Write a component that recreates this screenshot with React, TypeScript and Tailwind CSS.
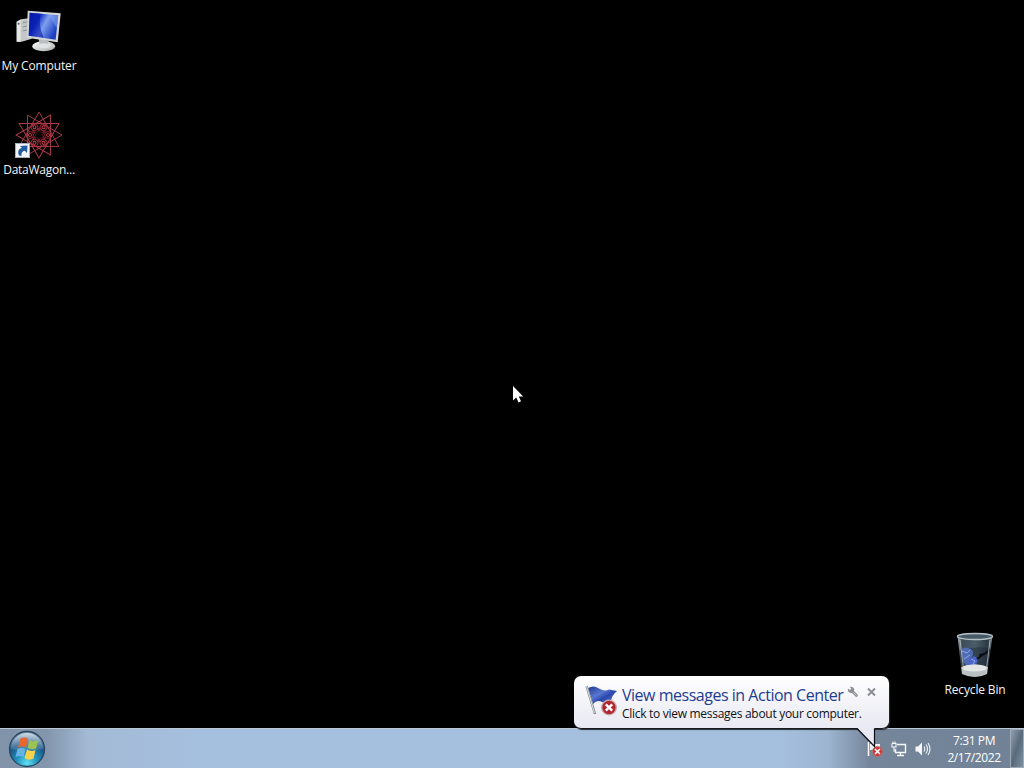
import type { ReactNode } from "react";

type DesktopIconProps = {
  label: string;
  className: string;
  labelClassName: string;
  children: ReactNode;
};

const triangles = [0, 30, 60, 90];
const rings = [0, 60, 120, 180, 240, 300];

function DesktopIcon({ label, className, labelClassName, children }: DesktopIconProps) {
  return (
    <div className={`absolute flex w-[78px] flex-col items-center ${className}`}>
      {children}
      <span
        className={`mt-[3px] whitespace-nowrap text-[12px] leading-4 text-[#f4f4f4] ${labelClassName}`}
      >
        {label}
      </span>
    </div>
  );
}

function ComputerIcon() {
  return (
    <svg width="48" height="48" viewBox="0 0 48 48">
      <defs>
        <linearGradient id="screen" x1="0" y1="0" x2="1" y2="0.5">
          <stop offset="0" stopColor="#0618a0" />
          <stop offset="0.35" stopColor="#1230c8" />
          <stop offset="0.6" stopColor="#7fa0ee" />
          <stop offset="1" stopColor="#1d3fc0" />
        </linearGradient>
        <linearGradient id="stand" x1="0" y1="0" x2="1" y2="1">
          <stop offset="0" stopColor="#ffffff" />
          <stop offset="1" stopColor="#a9adad" />
        </linearGradient>
      </defs>
      <g transform="translate(0.700 0.800)">
        <path d="M1 14 L5 11.500 L13 10.500 L16 31 L6 34 L1 34 Z" fill="#c3c6c6" />
        <path d="M1 14 L5 12 L5 34 L1 34 Z" fill="#e4e6e6" />
        <path d="M7 15 L12 14 M7 19 L12 18 M7 23 L12 22" stroke="#8d9292" />
        <circle cx="3" cy="16" r="1" fill="#555" />
        <ellipse cx="28" cy="38.500" rx="11.500" ry="5" fill="url(#stand)" />
        <path d="M23 31 L33 33 L31 39 Q27 41 24 38 Z" fill="#b9bdbd" />
        <ellipse cx="28" cy="38" rx="7" ry="2.500" fill="#dfe2e2" />
        <path d="M12 3 L45 5.500 L42 34.500 L11 30 Z" fill="#d3d6d7" />
        <path d="M14 5 L42.500 7.500 L40 32 L13 28 Z" fill="url(#screen)" />
        <path d="M14 5 L25 6 Q22 17 28 30 L13 28 Z" fill="#0618aa" opacity="0.6" />
        <path d="M33 7 L42.500 8 L41 20 Z" fill="#83a5f2" opacity="0.5" />
      </g>
    </svg>
  );
}

function DataWagonIcon() {
  return (
    <svg width="48" height="48" viewBox="0 0 48 48" fill="none">
      <g stroke="#b03c4a" strokeWidth="0.900">
        {triangles.map((a) => (
          <path key={a} d="M24 1 L43.900 35.500 L4.100 35.500 Z" transform={`rotate(${a} 24 24)`} />
        ))}
        {rings.map((a) => (
          <g key={a} transform={`rotate(${a + 30} 24 24)`}>
            <circle cx="24" cy="15" r="3.400" stroke="#a92c3c" />
            <circle cx="24" cy="15" r="1.500" stroke="#d04454" />
            <path d="M20 18 L24 21 L28 18" stroke="#8c2633" />
          </g>
        ))}
      </g>
      <circle cx="24" cy="24" r="3.500" fill="#080204" />
      <rect x="0.500" y="32.500" width="14" height="14" fill="#f1f5f9" stroke="#a5b0bb" />
      <path
        d="M4 44.500 Q1.500 38 7 37 L5 35 L12.500 34.500 L12 42 L9.800 39.800 Q6 40 6.500 45 Z"
        fill="#235c9f"
      />
    </svg>
  );
}

function RecycleBinIcon() {
  return (
    <svg width="48" height="48" viewBox="0 0 48 48">
      <defs>
        <linearGradient id="glass" x1="0" y1="0" x2="1" y2="0">
          <stop offset="0" stopColor="#a1b0bb" />
          <stop offset="0.13" stopColor="#3c4d58" />
          <stop offset="0.5" stopColor="#4b5d69" />
          <stop offset="0.87" stopColor="#2c3943" />
          <stop offset="1" stopColor="#8796a0" />
        </linearGradient>
      </defs>
      <path d="M6.500 5 L11 43 Q24 49 36 43 L41.500 5 Z" fill="url(#glass)" />
      <path d="M8 19 Q24 15 40 17 L37 37 L10 38 Z" fill="#18212c" opacity="0.4" />
      <path d="M10 20 Q12 15 17 17 Q23 18 22 24 L19 28 L22 33 L17 36 L12 31 Z" fill="#4f6bb5" />
      <path d="M11 20 L16 22 L19 19 M13 28 L19 24" stroke="#91a8dd" fill="none" />
      <path d="M18 28 L23 25 L27 28 L25 34 L17 34 Z" fill="#4a63c8" />
      <path d="M20 28 L24 30 L22 33" stroke="#98a8f0" fill="none" />
      <path d="M26 28 L39 19 M28 24 L36 22" stroke="#080e18" strokeWidth="1.700" />
      <path d="M10.300 36 Q23 31 37 36 L36 43 Q24 49 11 43 Z" fill="#b9bfc1" />
      <ellipse cx="23.500" cy="37" rx="12.500" ry="3.500" fill="#e4e6e5" />
      <path d="M9 9 L13 42 M39 9 L35 42" stroke="#c6d0d6" opacity="0.7" />
      <ellipse cx="24" cy="5.500" rx="17.500" ry="3" fill="#465a67" stroke="#b6c0c7" strokeWidth="1.400" />
    </svg>
  );
}

function ErrorBadge() {
  return (
    <>
      <circle cx="24" cy="23.500" r="7.300" fill="#ad2832" stroke="#c9a9ac" strokeWidth="1.300" />
      <path d="M20.800 20.300 L27.200 26.700 M27.200 20.300 L20.800 26.700" stroke="#fff" strokeWidth="2.400" />
    </>
  );
}

function FlagIcon() {
  return (
    <svg width="32" height="32" viewBox="0 0 32 32">
      <defs>
        <linearGradient id="flag" x1="0" y1="0" x2="1" y2="1">
          <stop offset="0" stopColor="#20368f" />
          <stop offset="0.4" stopColor="#5878d0" />
          <stop offset="0.6" stopColor="#2b46ae" />
          <stop offset="1" stopColor="#5f84d8" />
        </linearGradient>
      </defs>
      <path d="M3 4 Q9 1 13 4 Q19 8 24 5.500 L32 7 Q27 11 26 17 Q22 20 17 18 Q12 15 8 20 Z" fill="url(#flag)" />
      <path d="M1.500 2 L10 30" stroke="#858b91" strokeWidth="2.400" />
      <path d="M1.500 2 L9.500 29" stroke="#dce0e3" strokeWidth="1" />
      <ErrorBadge />
    </svg>
  );
}

function WrenchIcon() {
  return (
    <svg width="12" height="12" viewBox="0 0 12 12" fill="none">
      <path d="M5.500 5.500 L9.500 9.500" stroke="#8c8f96" strokeWidth="2.800" strokeLinecap="round" />
      <path d="M0.800 2.500 L3 4 L4.200 2.800 L2.800 0.800 Q6.500 0 7.200 3.500 L7 6.500 L4 7 Q0.500 6.500 0.800 2.500 Z" fill="#8c8f96" />
      <path d="M6.500 6.500 L9.500 9.500" stroke="#d4d6da" strokeWidth="0.800" />
    </svg>
  );
}

function Balloon() {
  return (
    <div className="absolute left-[574px] top-[676px] z-20 h-[53px] w-[315px]">
      <div className="flex h-full rounded-[7px] border-b border-[#17191d] bg-linear-to-b from-white to-[#e8e9f2] shadow-[1px_1px_1px_#252a30]">
        <div className="ml-[11px] mt-2 w-[37px] shrink-0">
          <FlagIcon />
        </div>
        <div className="flex-1 whitespace-nowrap pt-2">
          <div className="text-[16px] leading-[22px] tracking-[-0.480px] text-[#1e3c90]">
            View messages in Action Center
          </div>
          <div className="text-[12px] leading-4 tracking-[-0.290px] text-[#101014]">
            Click to view messages about your computer.
          </div>
        </div>
        <button type="button" className="absolute left-[273px] top-[10px]" aria-label="Options">
          <WrenchIcon />
        </button>
        <button type="button" className="absolute left-[293px] top-[12px]" aria-label="Close">
          <svg width="9" height="8" viewBox="0 0 9 8">
            <path d="M1 0.500 L8 7.500 M8 0.500 L1 7.500" stroke="#8a8d93" strokeWidth="2" />
          </svg>
        </button>
      </div>
      <svg className="absolute left-[282px] top-[51px]" width="22" height="22" viewBox="0 0 22 22">
        <path d="M0 0 L18.500 19 L18.500 0 Z" fill="#e8e9f2" />
        <path d="M1 1.500 L18.500 19.500 L18.500 1.500" fill="none" stroke="#0d1014" strokeWidth="1.200" />
      </svg>
    </div>
  );
}

function StartOrb() {
  return (
    <svg width="38" height="38" viewBox="0 0 38 38">
      <defs>
        <radialGradient id="orb" cx="0.5" cy="0.9" r="0.85">
          <stop offset="0" stopColor="#5fe0f2" />
          <stop offset="0.35" stopColor="#2193bd" />
          <stop offset="0.7" stopColor="#1c5685" />
          <stop offset="1" stopColor="#7895ad" />
        </radialGradient>
        <linearGradient id="gloss" x1="0" y1="0" x2="0" y2="1">
          <stop offset="0" stopColor="#e4eef5" stopOpacity="0.8" />
          <stop offset="1" stopColor="#7697b4" stopOpacity="0.3" />
        </linearGradient>
      </defs>
      <circle cx="19" cy="19" r="17.500" fill="url(#orb)" stroke="#284863" strokeWidth="1.300" />
      <path d="M3 19 A16 16 0 0 1 35 19 Q19 22 3 19 Z" fill="url(#gloss)" />
      <path d="M12.500 8.500 Q16 6.500 20 8.500 L18 17.500 Q14 15.500 10 17.500 Z" fill="#e66730" />
      <path d="M21.500 10 Q25 12.500 30.500 10 L28 18.500 Q23.500 20 19.500 18 Z" fill="#9bc550" />
      <path d="M9.500 19 Q13.500 17 17.500 19 L15.500 27 Q12 25 7.500 27 Z" fill="#68b3e6" />
      <path d="M19 19.500 Q23 22 27.500 20 L25.500 28.500 Q21 31 16.500 28 Z" fill="#fbd04a" />
    </svg>
  );
}

function TrayIcons() {
  return (
    <div className="flex items-center gap-2">
      <svg width="16" height="16" viewBox="0 0 16 16">
        <path d="M1.500 1 V15" stroke="#fff" strokeWidth="1.500" />
        <path d="M3 3 Q6 1 8 3 L13 3 V8 L3 9 Z" fill="#eef0f3" />
        <circle cx="10.500" cy="10.500" r="5" fill="#cf3a38" stroke="#b87478" strokeWidth="0.700" />
        <path d="M8 8 L13 13 M13 8 L8 13" stroke="#fff" strokeWidth="1.600" />
      </svg>
      <svg width="16" height="16" viewBox="0 0 16 16" fill="none">
        <path d="M6 3.500 H14.500 V11.500 H4.500 V8" stroke="#f5f7f9" strokeWidth="1.400" />
        <path d="M9.500 12 V14 M6 14.500 H13" stroke="#f5f7f9" strokeWidth="1.400" />
        <path d="M1 2.500 V6 H5 V2.500 H1 M2 0.500 V3 M4 0.500 V3 M3 6 V10 H4.500" stroke="#f5f7f9" strokeWidth="1.100" />
      </svg>
      <svg width="16" height="16" viewBox="0 0 16 16" fill="none">
        <path d="M0.500 5.500 H3 L7 1.500 V14.500 L3 10.500 H0.500 Z" fill="#f5f7f9" />
        <path d="M9 5.500 Q10.500 8 9 10.500 M11 3.500 Q14 8 11 12.500 M13 2 Q17 8 13 14" stroke="#f0f3f6" strokeWidth="1.100" />
      </svg>
    </div>
  );
}

function Taskbar() {
  return (
    <footer className="flex h-10 items-stretch border-t border-[#bac8d6] bg-[linear-gradient(90deg,#8093a9_0px,#8396ac_48px,#a3bad5_88px,#a5bfde_200px,#a5bfde_780px,#9db5d0_828px,#75859a_870px,#718296_1024px)]">
      <button type="button" className="ml-2 mt-px h-[38px] w-[38px]" aria-label="Start">
        <StartOrb />
      </button>
      <div className="flex-1" />
      <TrayIcons />
      <div className="ml-3 flex w-[62px] flex-col items-center whitespace-nowrap pt-[3px] text-[12px] leading-[17px] tracking-[-0.400px] text-white">
        <span>7:31 PM</span>
        <span>2/17/2022</span>
      </div>
      <div className="ml-[5px] w-[14px] border border-[#9eabb7] bg-linear-to-br from-[#91a0af] via-[#596a7b] to-[#7d91a2]" />
    </footer>
  );
}

export default function App() {
  return (
    <div className="relative flex h-screen flex-col overflow-hidden bg-black font-['Open_Sans','Noto_Sans',sans-serif]">
      <main className="relative flex-1">
        <DesktopIcon label="My Computer" className="left-0 top-[7px]" labelClassName="tracking-[-0.150px]">
          <ComputerIcon />
        </DesktopIcon>
        <DesktopIcon label="DataWagon..." className="left-0 top-[111px]" labelClassName="tracking-[-0.250px]">
          <DataWagonIcon />
        </DesktopIcon>
        <DesktopIcon
          label="Recycle Bin"
          className="left-[936px] top-[631px]"
          labelClassName="tracking-[-0.150px]"
        >
          <RecycleBinIcon />
        </DesktopIcon>
        <svg className="absolute left-[512px] top-[385px]" width="13" height="19" viewBox="0 0 13 19">
          <path
            d="M1 1 V15.500 L4.300 12.500 L6.500 17.500 L9 16.300 L6.800 11.500 H11.200 Z"
            fill="#fff"
          />
        </svg>
      </main>
      <Taskbar />
      <Balloon />
    </div>
  );
}
